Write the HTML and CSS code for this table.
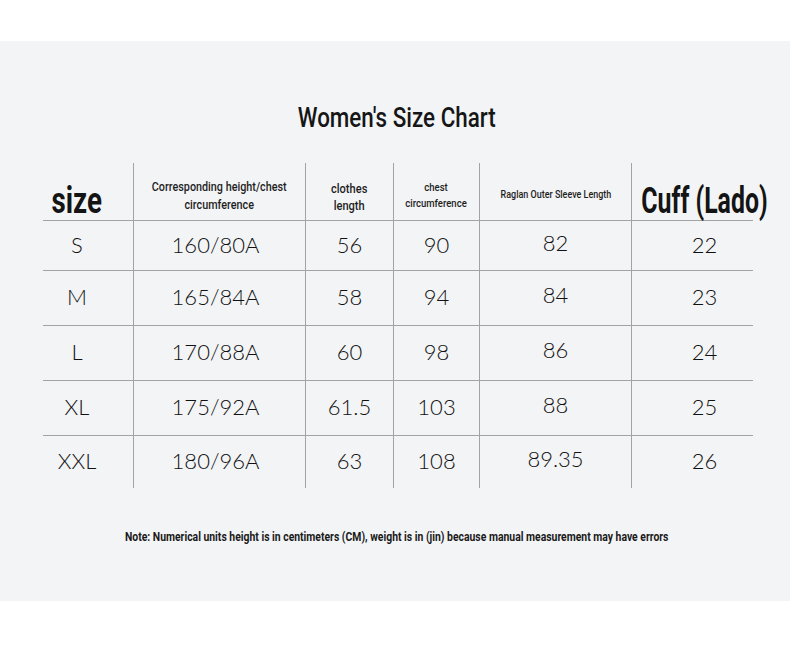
FILE: index.html
```html
<!DOCTYPE html>
<html lang="en">
<head>
<meta charset="utf-8">
<title>Women's Size Chart</title>
<link rel="stylesheet" href="styles.css">
</head>
<body>
<div class="panel">
  <h1 class="title"><span class="cond">Women's Size Chart</span></h1>
  <div class="table">
    <div class="row head">
      <div class="cell hc-size"><span class="cond big">size</span></div>
      <div class="cell hc-2"><span class="cond">Corresponding height/chest<br>circumference</span></div>
      <div class="cell hc-3"><span class="cond">clothes<br>length</span></div>
      <div class="cell hc-4"><span class="cond">chest<br>circumference</span></div>
      <div class="cell hc-5"><span class="cond">Raglan Outer Sleeve Length</span></div>
      <div class="cell hc-6"><span class="cond big">Cuff (Lado)</span></div>
    </div>
    <div class="row data r-first">
      <div class="cell">S</div><div class="cell c2">160/80A</div><div class="cell">56</div><div class="cell">90</div><div class="cell up">82</div><div class="cell">22</div>
    </div>
    <div class="row data">
      <div class="cell">M</div><div class="cell c2">165/84A</div><div class="cell">58</div><div class="cell">94</div><div class="cell up">84</div><div class="cell">23</div>
    </div>
    <div class="row data">
      <div class="cell">L</div><div class="cell c2">170/88A</div><div class="cell">60</div><div class="cell">98</div><div class="cell up">86</div><div class="cell">24</div>
    </div>
    <div class="row data">
      <div class="cell">XL</div><div class="cell c2">175/92A</div><div class="cell">61.5</div><div class="cell">103</div><div class="cell up">88</div><div class="cell">25</div>
    </div>
    <div class="row data r-last">
      <div class="cell">XXL</div><div class="cell c2">180/96A</div><div class="cell">63</div><div class="cell">108</div><div class="cell up">89.35</div><div class="cell">26</div>
    </div>
  </div>
  <p class="note"><span class="cond">Note: Numerical units height is in centimeters (CM), weight is in (jin) because manual measurement may have errors</span></p>
</div>
</body>
</html>
```
FILE: styles.css
```css
* { box-sizing: border-box; margin: 0; padding: 0; }

body {
  background: #ffffff;
  font-family: Roboto, "Liberation Sans", sans-serif;
  color: #1c1c1c;
}

.panel {
  margin-top: 41px;
  height: 560px;
  background: #f3f4f6;
  padding-top: 63px;
  padding-left: 4px;
}

.cond {
  display: inline-block;
  white-space: nowrap;
  transform: scaleX(0.8);
}

.title {
  display: flex;
  justify-content: center;
  font-size: 28px;
  line-height: 28px;
  font-weight: 500;
  color: #161616;
}
.title .cond { transform: scaleX(0.8); }

.table {
  margin: 31px 0 0 39px;
  width: 734px;
}

.row {
  display: grid;
  grid-template-columns: 90px 172px 88px 86px 152px 146px;
  background: linear-gradient(#a3a3a3, #a3a3a3) left bottom / 710px 1px no-repeat;
}

.head { height: 58px; }
.data { height: 55px; }
.r-first { height: 50px; }
.r-last { height: 52px; background: none; }

.cell {
  display: flex;
  justify-content: center;
  align-items: center;
  border-left: 1px solid #a3a3a3;
}
.cell:first-child { border-left: 0; padding-right: 22px; }

.data .cell {
  font-family: Lato, "Open Sans", sans-serif;
  font-weight: 300;
  font-size: 22px;
  color: #111111;
  padding-bottom: 4px;
}
.data .cell:first-child { padding-right: 22px; }
.data .cell.c2 { padding-right: 8px; }
.data .cell.up { padding-bottom: 8px; }

.head .cell {
  align-items: flex-start;
  text-align: center;
  font-weight: 500;
  color: #1e1e1e;
}

.big {
  font-size: 36px;
  line-height: 36px;
  font-weight: 700;
  color: #141414;
}
.head .hc-size, .head .hc-6 {
  align-items: flex-end;
  padding-bottom: 2px;
}
.hc-size .cond { transform: scaleX(0.77); }
.hc-6 .cond { transform: scaleX(0.69); }

.hc-2 { font-size: 13px; line-height: 17.5px; padding-top: 15px; }
.hc-2 .cond { transform: scaleX(0.83); }
.hc-3 { font-size: 13.5px; line-height: 17.5px; padding-top: 16.5px; }
.hc-3 .cond { transform: scaleX(0.82); }
.hc-4 { font-size: 11.5px; line-height: 16px; padding-top: 15.5px; }
.hc-4 .cond { transform: scaleX(0.83); }
.hc-5 { font-size: 11.5px; line-height: 14px; padding-top: 24.4px; }
.hc-5 .cond { transform: scaleX(0.78); }

.note {
  display: flex;
  justify-content: center;
  margin-top: 42px;
  font-size: 13px;
  line-height: 13px;
  font-weight: 700;
  color: #1a1a1a;
}
.note .cond { transform: scaleX(0.8); }
```
